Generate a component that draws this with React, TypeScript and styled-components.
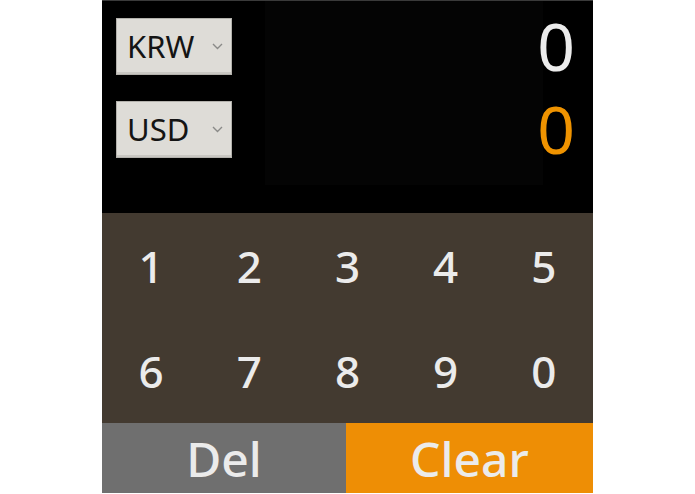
import { createGlobalStyle, styled } from 'styled-components';

const GlobalStyle = createGlobalStyle`
  html, body {
    margin: 0;
    padding: 0;
    background: #ffffff;
  }
  body {
    font-family: "Noto Sans", "Open Sans", sans-serif;
  }
`;

const currencies = [
  { code: 'KRW', value: '0', highlight: false },
  { code: 'USD', value: '0', highlight: true },
];

const keys = ['1', '2', '3', '4', '5', '6', '7', '8', '9', '0'];

const Chevron = () => (
  <svg width="11" height="7" viewBox="0 0 11 7">
    <path d="M1 1 L5.5 5.5 L10 1" fill="none" stroke="#8a8a88" strokeWidth="1.4" />
  </svg>
);

const App = () => {
  return (
    <>
      <GlobalStyle />
      <Page>
        <Converter>
          <Header>
            <Screen />
            {currencies.map((c) => (
              <CurrencyRow key={c.code}>
                <SelectBox>
                  <SelectText>{c.code}</SelectText>
                  <Chevron />
                </SelectBox>
                <Amount $highlight={c.highlight}>{c.value}</Amount>
              </CurrencyRow>
            ))}
          </Header>
          <Keypad>
            {keys.map((k) => (
              <Key key={k}>{k}</Key>
            ))}
          </Keypad>
          <Actions>
            <ActionButton $color="#6f6f6f">Del</ActionButton>
            <ActionButton $color="#ee8e05">Clear</ActionButton>
          </Actions>
        </Converter>
      </Page>
    </>
  );
};

export default App;

const Page = styled.main`
  display: flex;
  justify-content: center;
  width: 100%;
  height: 494px;
`;

const Converter = styled.div`
  display: flex;
  flex-direction: column;
  width: 491px;
  height: 493px;
`;

const Header = styled.section`
  position: relative;
  display: flex;
  flex-direction: column;
  gap: 26px;
  height: 213px;
  box-sizing: border-box;
  padding: 17px 18px 0 14px;
  background: #000000;
  border-top: 1px solid #3a3a3a;
`;

const Screen = styled.div`
  position: absolute;
  top: 0;
  left: 163px;
  width: 278px;
  height: 184px;
  background: #040404;
`;

const CurrencyRow = styled.div`
  position: relative;
  display: flex;
  align-items: center;
  justify-content: space-between;
  height: 57px;
`;

const SelectBox = styled.div`
  display: flex;
  align-items: center;
  justify-content: space-between;
  width: 116px;
  height: 57px;
  box-sizing: border-box;
  padding: 0 8px 0 10px;
  background: #dedcd7;
  border: 1px solid #b3b1ac;
  box-shadow: inset 0 -2px 0 #c9c7c2;
`;

const SelectText = styled.span`
  font-size: 31px;
  color: #141414;
  line-height: 1;
`;

const Amount = styled.span<{ $highlight: boolean }>`
  font-size: 66px;
  line-height: 1;
  margin-top: -4px;
  color: ${({ $highlight }) => ($highlight ? '#ef9300' : '#ececec')};
`;

const Keypad = styled.section`
  display: grid;
  grid-template-columns: repeat(5, 1fr);
  grid-template-rows: repeat(2, 1fr);
  height: 210px;
  background: #433a30;
`;

const Key = styled.div`
  display: flex;
  align-items: center;
  justify-content: center;
  font-size: 44px;
  font-weight: 500;
  color: #ebebeb;
`;

const Actions = styled.section`
  display: grid;
  grid-template-columns: 244px 1fr;
  flex: 1;
`;

const ActionButton = styled.div<{ $color: string }>`
  display: flex;
  align-items: center;
  justify-content: center;
  font-size: 48px;
  font-weight: 500;
  color: #ebebeb;
  background: ${({ $color }) => $color};
`;
